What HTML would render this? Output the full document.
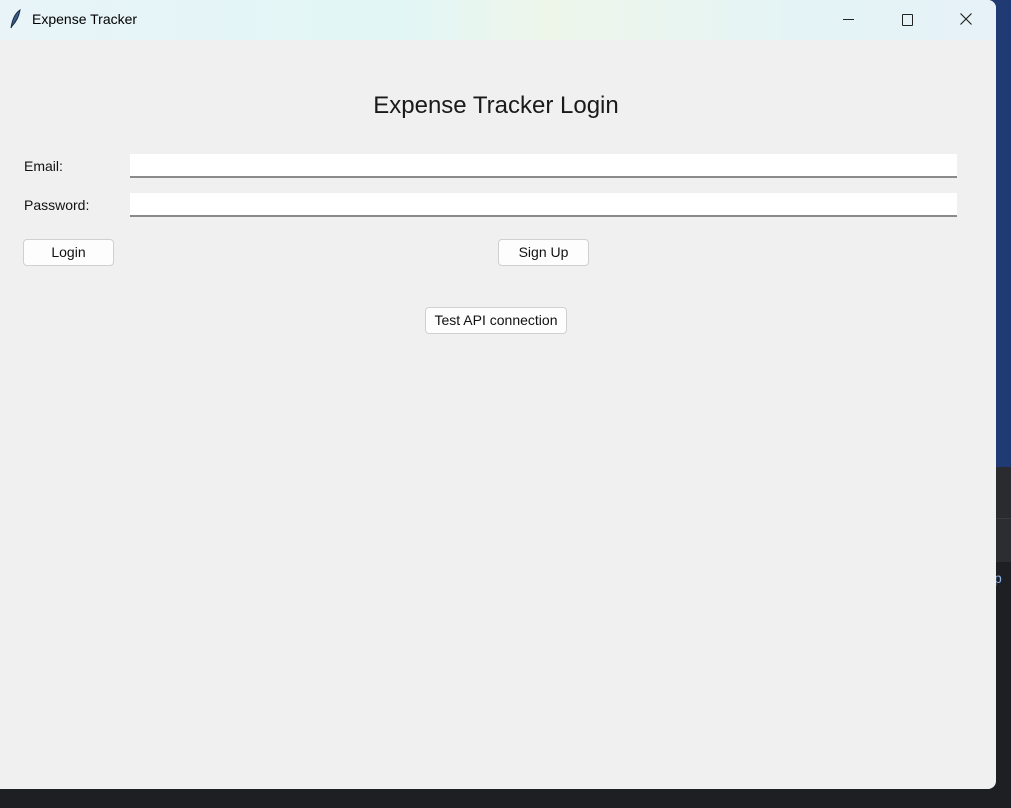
<!DOCTYPE html>
<html><head><style>
body{margin:0;width:1011px;height:808px;background:#1e1f22;position:relative;overflow:hidden;font-family:"Liberation Sans",sans-serif;}
.bg1{position:absolute;left:990px;top:0;width:21px;height:467px;background:#203b74}
.bg2{position:absolute;left:990px;top:467px;width:21px;height:51px;background:#2a2b2e;border-bottom:1px solid #3a3b3e}
.bg3{position:absolute;left:990px;top:519px;width:21px;height:43px;background:#2b2d30}
.win{position:absolute;left:0;top:0;width:996px;height:789px;background:#f0f0f0;border-radius:0 8px 8px 0;overflow:hidden}
.tb{height:40px;background:linear-gradient(90deg,#e8f4f8,#e2f6f6 40%,#eef6ea 55%,#e4f4f6 80%,#e6f2f8);position:relative;font-size:14px;color:#000}
.t{position:absolute;font-size:13px;color:#111}
.inp{position:absolute;left:130px;width:827px;height:24px;background:#fff;border-bottom:2px solid #8a8a8a;box-sizing:border-box}
.btn{position:absolute;height:27px;background:#fdfdfd;border:1px solid #d0d0d0;border-radius:4px;box-sizing:border-box;font-size:14px;color:#111;text-align:center;line-height:25px}
</style></head><body>
<div class="bg1"></div><div class="bg2"></div><div class="bg3"></div>
<div class="t" style="left:994px;top:570px;color:#8ab4e8;font-size:14px">p</div>
<div class="win">
<div class="tb">
<svg style="position:absolute;left:9px;top:9px" width="12" height="20" viewBox="0 0 12 20"><path d="M2 19 C3 12 5 5 11 1 C10 7 7 13 3 17 Z" fill="#3a5f8a" stroke="#1a2a40" stroke-width="1"/></svg>
<span style="position:absolute;left:32px;top:11px">Expense Tracker</span>
<div style="position:absolute;left:843px;top:19px;width:11px;height:1px;background:#222"></div>
<div style="position:absolute;left:902px;top:14px;width:9px;height:10px;border:1px solid #222;border-radius:1px"></div>
<svg style="position:absolute;left:960px;top:13px" width="12" height="12"><path d="M0.5 0.5L11.5 11.5M11.5 0.5L0.5 11.5" stroke="#222" stroke-width="1.2"/></svg>
</div>
<div class="t" style="left:0;width:992px;text-align:center;top:92px;font-size:24px;color:#1a1a1a">Expense Tracker Login</div>
<div class="t" style="left:24px;top:158px;font-size:14px">Email:</div>
<div class="inp" style="top:154px"></div>
<div class="t" style="left:24px;top:197px;font-size:14px">Password:</div>
<div class="inp" style="top:193px"></div>
<div class="btn" style="left:23px;top:239px;width:91px">Login</div>
<div class="btn" style="left:498px;top:239px;width:91px">Sign Up</div>
<div class="btn" style="left:425px;top:307px;width:142px">Test API connection</div>
</div>
</body></html>
